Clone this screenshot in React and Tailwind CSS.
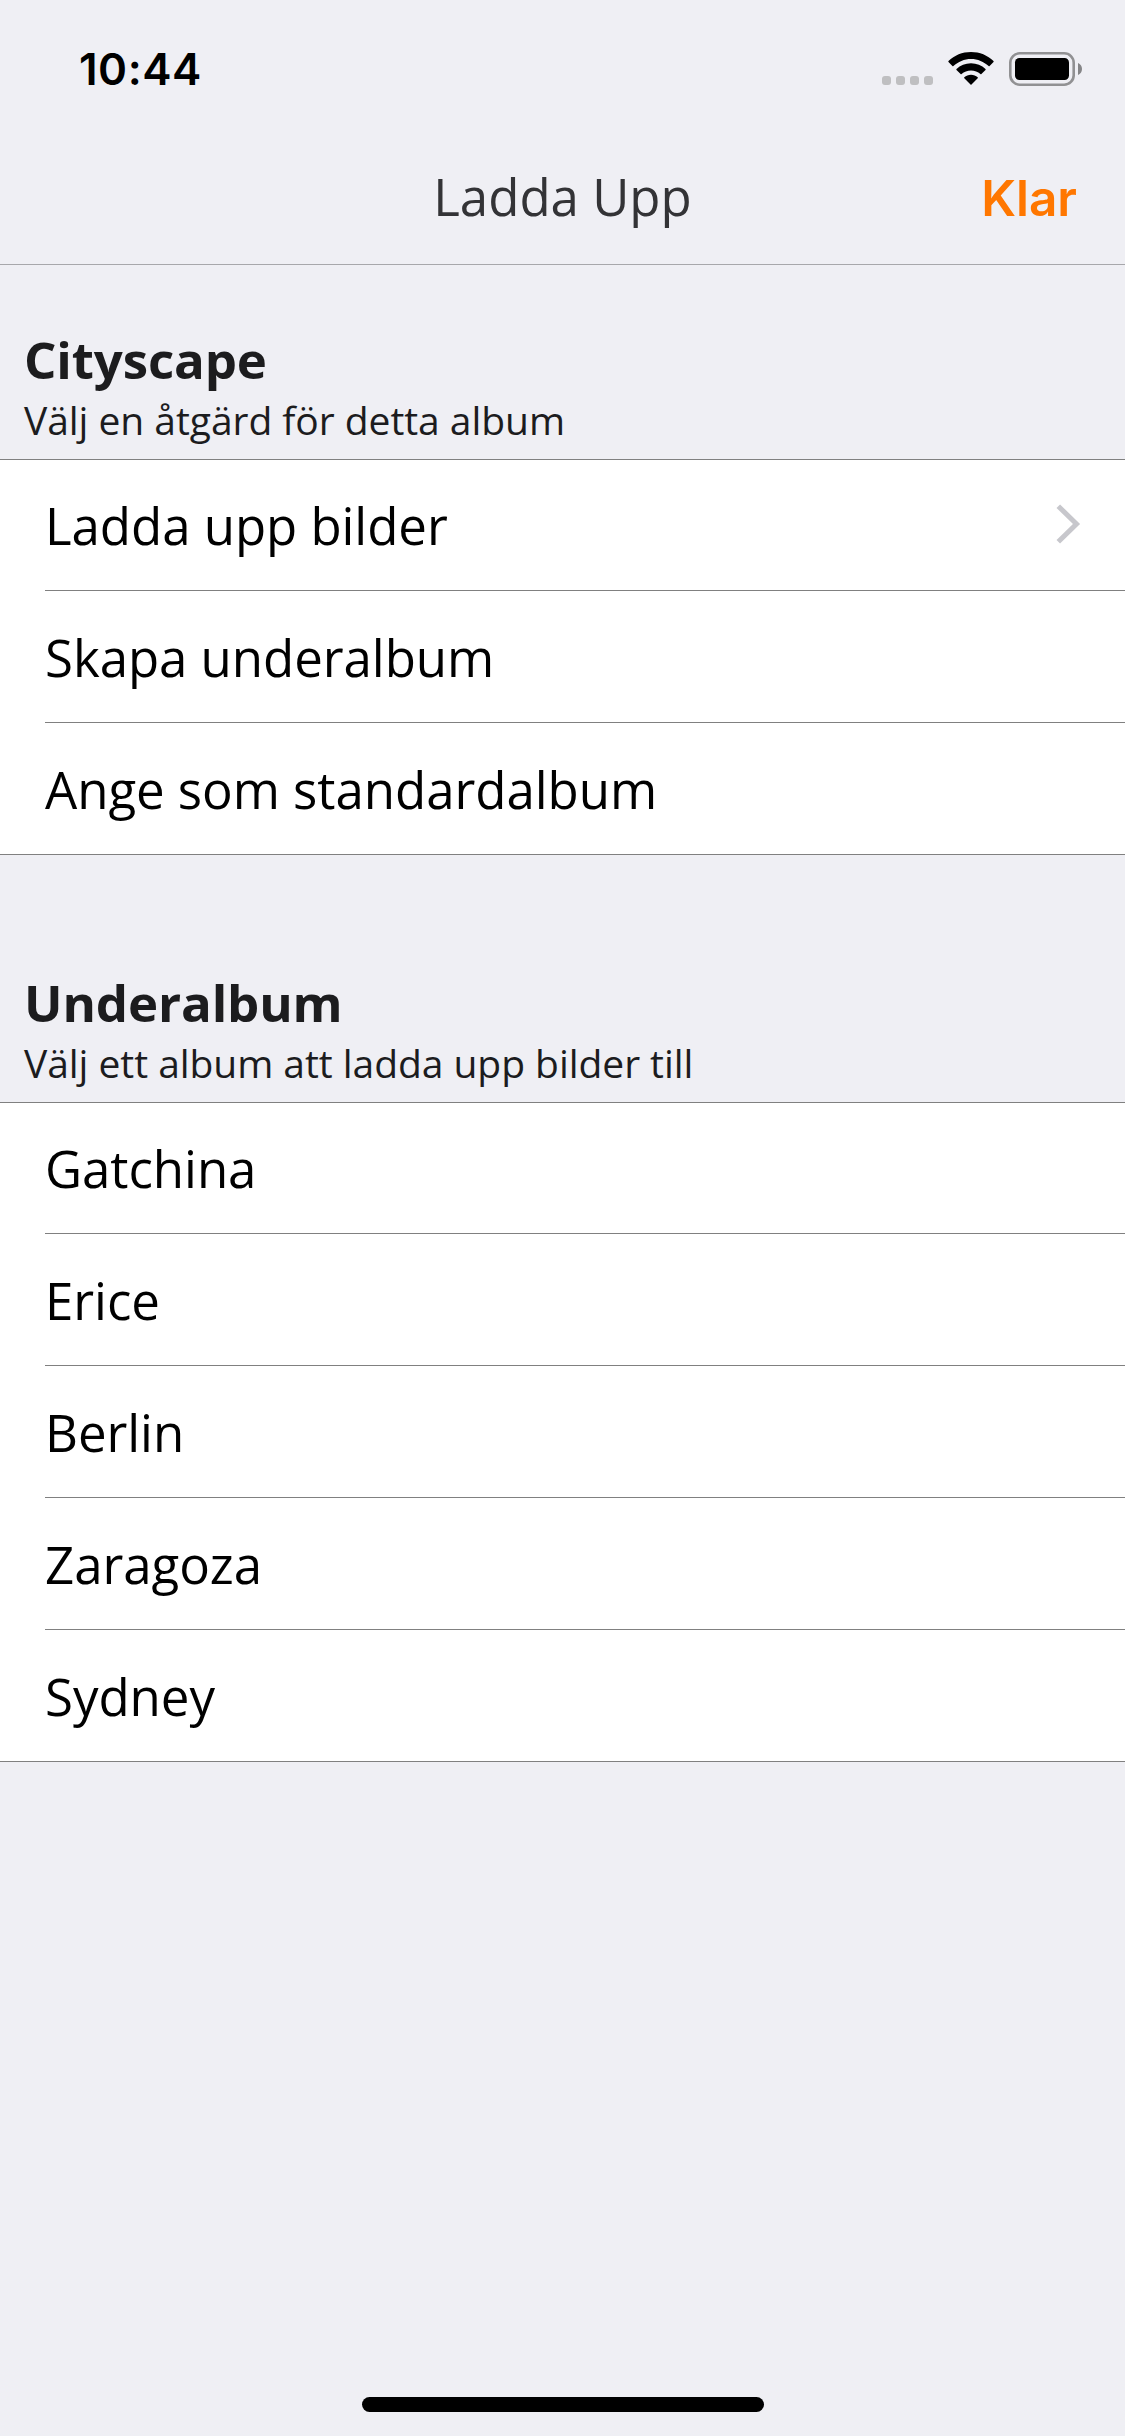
const actions = [
  { label: "Ladda upp bilder", chevron: true },
  { label: "Skapa underalbum" },
  { label: "Ange som standardalbum" },
];
const albums = ["Gatchina", "Erice", "Berlin", "Zaragoza", "Sydney"].map((label) => ({ label }));

function StatusBar() {
  return (
    <div className="flex h-[132px] items-start justify-between pl-[79px] pr-[43px]">
      <div className="mt-[42px] font-[Inter,sans-serif] text-[44px] leading-[54px] font-semibold tracking-[0.5px] text-black">10:44</div>
      <div className="mt-[52px] flex h-[34px]">
        <div className="mr-[57px] flex w-[9px] gap-[5px] pt-6">
          {[0, 1, 2, 3].map((i) => (
            <div key={i} className="size-[9px] shrink-0 rounded-[3px] bg-[#bfbfc1]" />
          ))}
        </div>
        <svg className="h-[34px] w-[46px]" viewBox="0 0 46 34" fill="black">
          <path d="M23 0C31.700 0 39.600 3.300 45.500 9c.3.300.3.700 0 1l-3.900 4.100c-.3.300-.7.300-1 0C35.900 9.700 29.700 7 23 7S10.100 9.700 5.400 14.100c-.3.300-.7.300-1 0L.5 10c-.3-.3-.3-.7 0-1C6.400 3.300 14.300 0 23 0Z" />
          <path d="M23 11.300c5.600 0 10.700 2.100 14.500 5.600.3.300.3.700 0 1l-4.100 4.200c-.3.300-.7.300-1 0C29.900 19.900 26.600 18.500 23 18.500s-6.900 1.400-9.400 3.600c-.3.300-.7.300-1 0l-4.100-4.200c-.3-.3-.3-.7 0-1C12.300 13.400 17.400 11.300 23 11.300Z" />
          <path d="M23 22.800c2.600 0 4.900.9 6.700 2.400.3.300.3.700 0 1l-6.200 6.400c-.3.300-.7.300-1 0l-6.200-6.400c-.3-.3-.3-.7 0-1C18.100 23.700 20.400 22.800 23 22.800Z" />
        </svg>
        <svg className="ml-[15px] h-[34px] w-[73px]" viewBox="0 0 73 34">
          <rect x="1.300" y="1.300" width="63.400" height="31.400" rx="9.500" fill="none" stroke="#919193" strokeWidth="2.600" />
          <rect x="6" y="6" width="54" height="22" rx="4.500" fill="black" />
          <path d="M69 11c2.400 1 4 3.300 4 6s-1.600 5-4 6Z" fill="#858587" />
        </svg>
      </div>
    </div>
  );
}

function Row({ label, chevron }) {
  return (
    <li className="group pl-[45px] last:border-b last:border-[#808080]">
      <div className="flex h-[132px] items-center justify-between border-b border-[#808080] pt-px group-first:h-[131px] group-first:pt-0 group-last:h-[131px] group-last:border-b-0">
        <span className="text-[51px] leading-[70px] tracking-[-0.05px] text-black">{label}</span>
        {chevron && (
          <svg className="mr-11 mb-[3px] h-10 w-[26px]" viewBox="0 0 26 40" fill="none" stroke="#c7c7cc" strokeWidth="5">
            <path d="M3.300 2.200 21.500 20 3.300 37.800" />
          </svg>
        )}
      </div>
    </li>
  );
}

function Section({ title, subtitle, rows, className }) {
  return (
    <section>
      <header className={className}>
        <h2 className="text-[51px] leading-[68px] font-bold tracking-[-0.13px]">{title}</h2>
        <p className="text-[39px] leading-[53px] tracking-[-0.05px]">{subtitle}</p>
      </header>
      <ul className="border-t border-[#808080] bg-white">
        {rows.map((row) => (
          <Row key={row.label} {...row} />
        ))}
      </ul>
    </section>
  );
}

export default function App() {
  return (
    <div className="flex h-[2436px] w-[1125px] flex-col bg-[#efeff4] font-['Open_Sans',sans-serif] text-[#1c1c1e]">
      <div className="h-[265px] border-b border-[#a7a7ab]">
        <StatusBar />
        <nav className="grid h-[132px] grid-cols-[1fr_auto_1fr] items-center">
          <span />
          <h1 className="pb-1 text-[51px] leading-[70px] text-[#333336]">Ladda Upp</h1>
          <button className="mr-[48px] justify-self-end font-[Inter,sans-serif] text-[49.500px] leading-[60px] font-semibold text-[#ff7700]">Klar</button>
        </nav>
      </div>
      <main className="flex-1">
        <Section title="Cityscape" subtitle="Välj en åtgärd för detta album" rows={actions} className="flex h-[194px] flex-col justify-end pb-[13px] pl-6" />
        <Section title="Underalbum" subtitle="Välj ett album att ladda upp bilder till" rows={albums} className="flex h-[247px] flex-col justify-end pb-[13px] pl-6" />
      </main>
      <div className="mb-6 ml-[1px] h-[15px] w-[402px] self-center rounded-full bg-black" />
    </div>
  );
}
